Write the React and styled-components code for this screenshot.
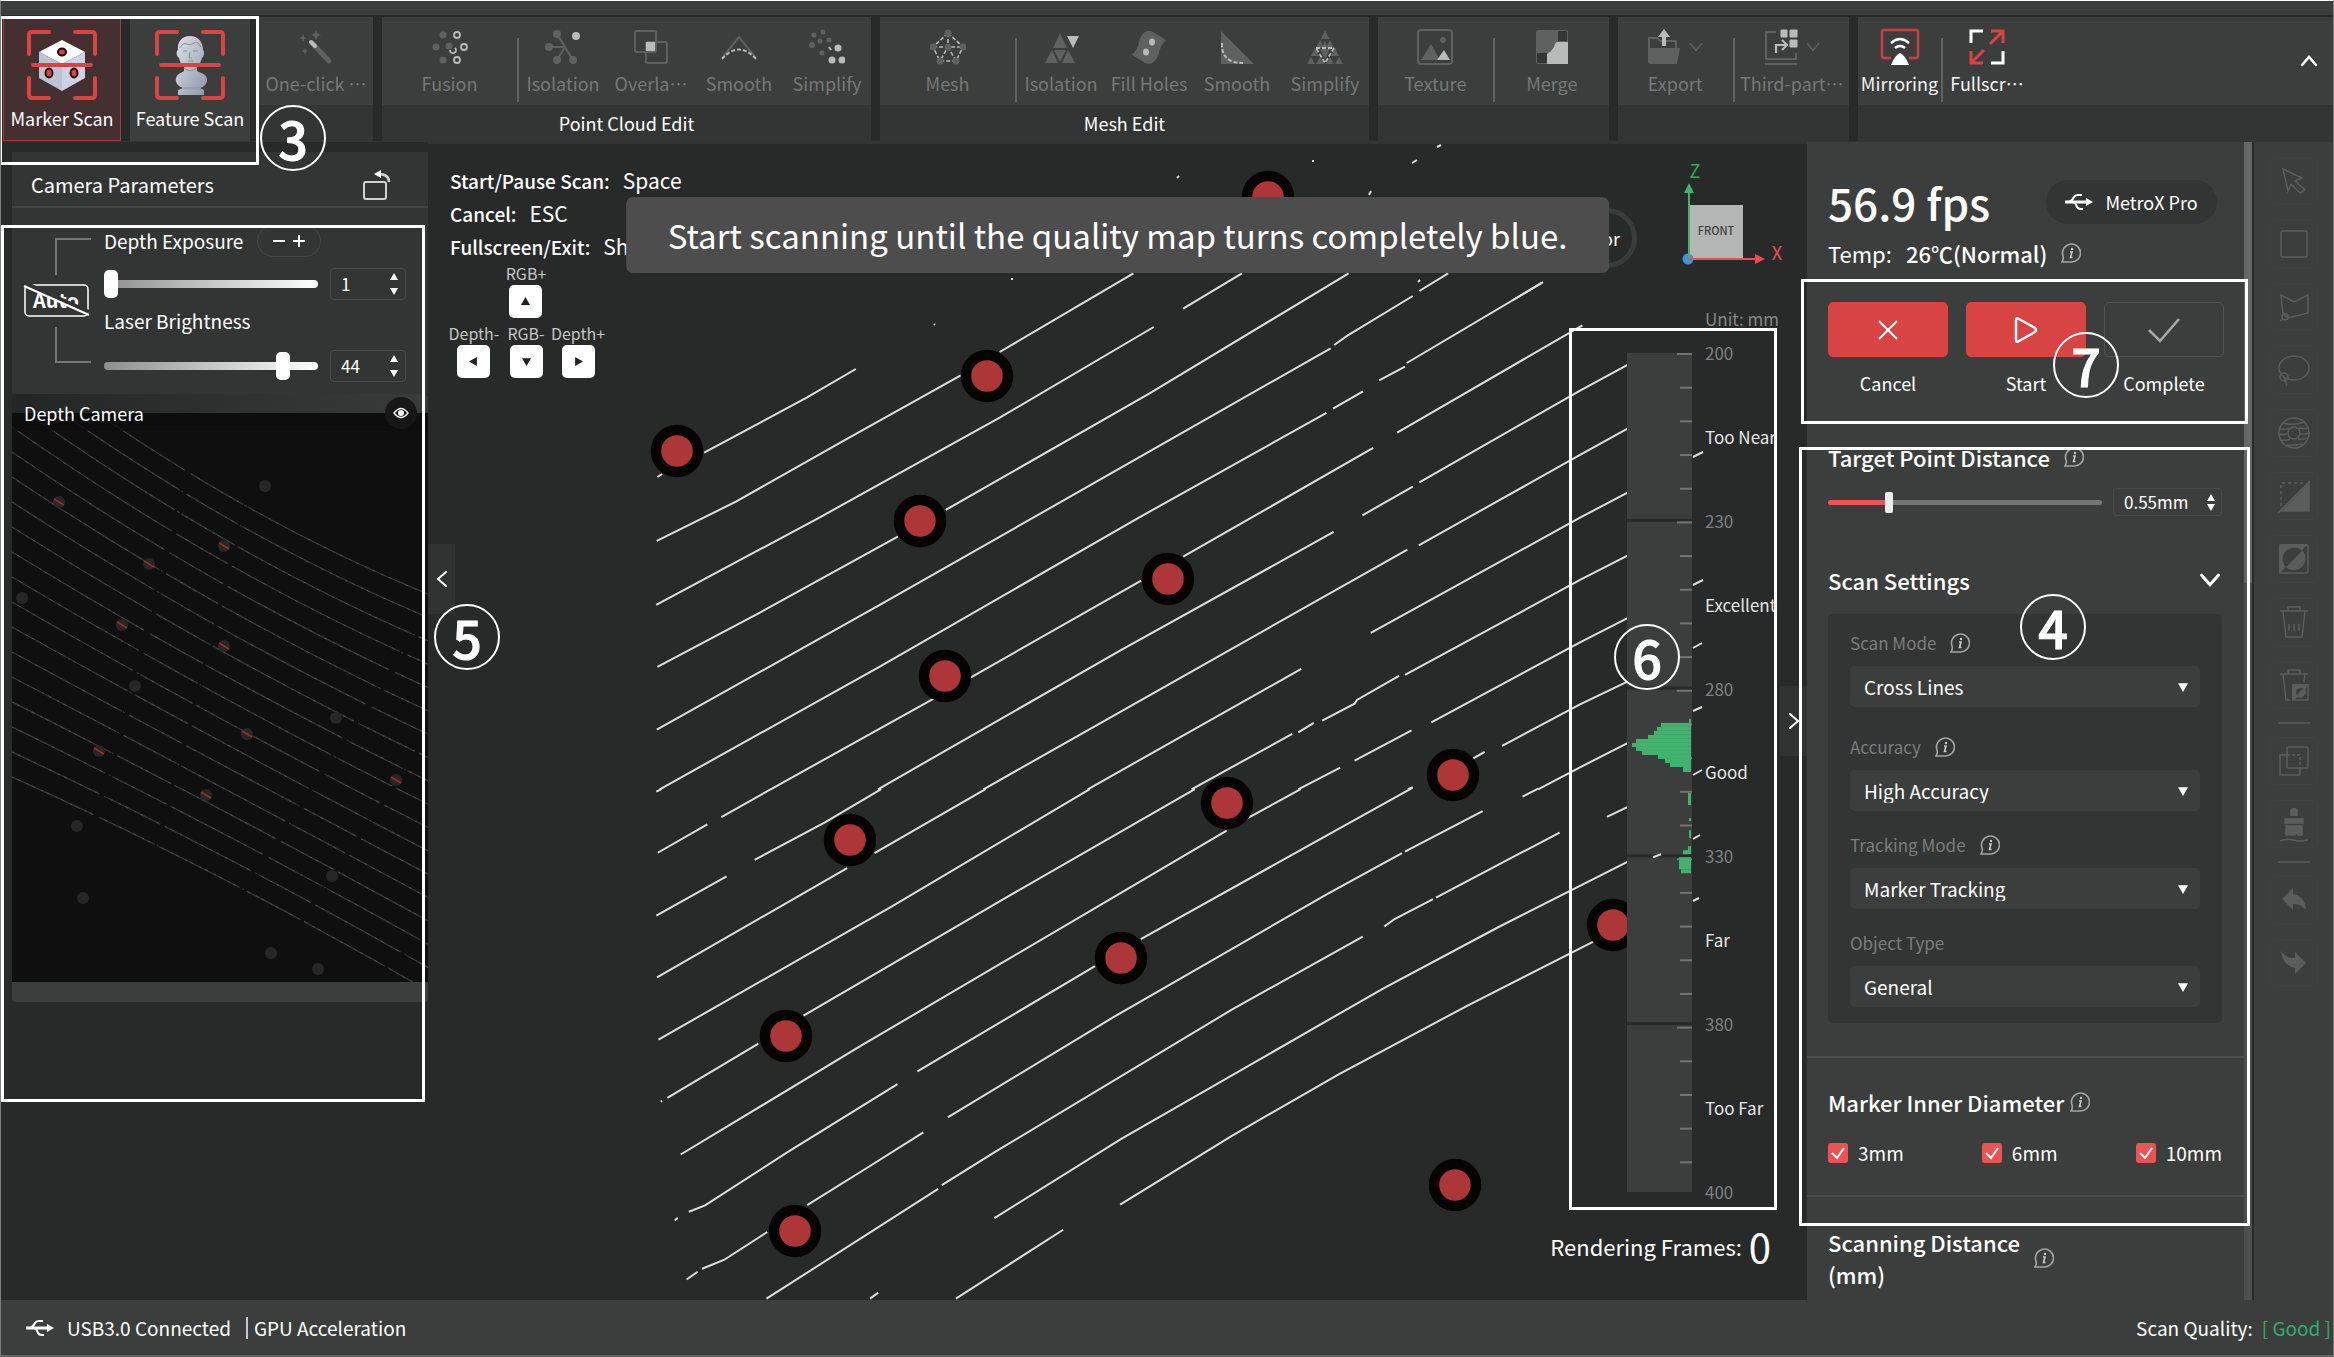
import React, { useState } from "react";
import styled, { createGlobalStyle } from "styled-components";

const GlobalStyle = createGlobalStyle`
  * { box-sizing: border-box; }
  body {
    margin: 0;
    background: #282a29;
    color: #fff;
    font-family: "Noto Sans CJK SC", "Noto Sans", sans-serif;
    font-size: 18px;
    line-height: 24px;
  }
  button, input, select { font: inherit; color: inherit; }
  button { padding: 0; border: 0; background: none; }
  svg { display: block; flex: none; }
`

const Window = styled.div`
  position: relative;
  display: flex;
  flex-direction: column;
  height: 100vh;
  min-height: 900px;
  overflow: hidden;
  border: 1px solid #7d7f7e;
  border-top-color: #fff;
  border-bottom: 2px solid #626463;
`

/* ---------- ribbon ---------- */

const TitleStrip = styled.div`
  height: 16px;
  flex: none;
  background: #3c3e3d;
  border-bottom: 2px solid #272928;
`

const Ribbon = styled.header`
  display: flex;
  gap: 9px;
  flex: none;
  height: 125px;
  padding-left: 2px;
  background: #282a29;
  border-bottom: 1px solid #333534;
`

const ScanMode = styled.button`
  display: flex;
  flex-direction: column;
  align-items: center;
  width: ${p => (p.$active ? 118 : 120)}px;
  padding-top: ${p => (p.$active ? 12 : 13)}px;
  background: ${p => (p.$active ? "#443031" : "#3c3e3d")};
  border: ${p => (p.$active ? "1px solid #a63c3e" : "0")};
  white-space: nowrap;

  span { margin-top: 6px; }
`

const Group = styled.section`
  display: flex;
  flex-direction: column;
  flex: ${p => (p.$width ? "none" : 1)};
  width: ${p => (p.$width ? p.$width + "px" : "auto")};
  background: #333534;
`

const GroupTools = styled.div`
  display: flex;
  height: 88px;
  background: #3c3e3d;
`

const GroupTitle = styled.h2`
  margin: 0;
  font-size: 18px;
  font-weight: 400;
  line-height: 36px;
  text-align: center;
`

const Tool = styled.button`
  display: flex;
  flex-direction: column;
  align-items: center;
  gap: 6px;
  flex: ${p => (p.$width ? "none" : 1)};
  width: ${p => (p.$width ? p.$width + "px" : "auto")};
  padding-top: 12px;
  color: ${p => (p.$on ? "#f2f2f2" : "#767877")};
  white-space: nowrap;
`

const IconPair = styled.span`
  display: flex;
  align-items: center;
  gap: 6px;
`

const ToolSeparator = styled.i`
  flex: none;
  width: 2px;
  height: 64px;
  margin-top: 21px;
  background: #626463;
`

const CollapseRibbon = styled.button`
  margin-left: auto;
  padding-right: 14px;
`

/* ---------- body ---------- */

const Body = styled.main`
  display: flex;
  flex: 1;
  min-height: 0;
`

const CameraPanel = styled.aside`
  flex: none;
  width: 427px;
  padding: 10px 0 0 11px;
`

const CameraHead = styled.div`
  display: flex;
  align-items: center;
  justify-content: space-between;
  height: 56px;
  padding: 12px 36px 0 19px;
  background: #333534;
  border-bottom: 2px solid #434544;

  h2 { margin: 0; font-size: 20px; font-weight: 400; }
`

const CameraControls = styled.div`
  display: flex;
  height: 186px;
  padding-top: 16px;
  background: #333534;
`

const AutoButton = styled.button`
  width: 82px;
  height: 140px;
  margin-left: 8px;
  padding-top: 11px;
`

const ControlStack = styled.div`
  display: flex;
  flex-direction: column;
  flex: 1;
  padding: 0 22px 0 2px;
`

const ControlTitle = styled.div`
  display: flex;
  align-items: center;
  height: 34px;
  gap: 14px;
  font-size: 19px;
`

const StepPill = styled.span`
  display: flex;
  align-items: center;
  justify-content: center;
  gap: 6px;
  width: 64px;
  height: 32px;
  border: 1px solid #454746;
  border-radius: 16px;

  button { display: flex; }
`

const ControlRow = styled.div`
  display: flex;
  align-items: center;
  gap: 12px;
  height: 32px;
  margin: ${p => (p.$low ? "12px" : "10px")} 0 4px;
`

const GradientRange = styled.input.attrs({ type: "range" })`
  appearance: none;
  flex: 1;
  min-width: 0;
  height: 8px;
  margin: 0;
  border-radius: 4px;
  background: linear-gradient(90deg, #8e8e8e, #fff);

  &::-webkit-slider-thumb {
    appearance: none;
    width: 14px;
    height: 28px;
    border-radius: 5px;
    background: #fff;
  }
`

const NumberBox = styled.div`
  display: flex;
  align-items: center;
  flex: none;
  width: ${p => p.$width}px;
  height: ${p => p.$height}px;
  padding: 0 ${p => (p.$height > 30 ? 7 : 6)}px 0 10px;
  border: 1px solid #484a49;
  border-radius: 4px;
  font-size: 17px;

  input {
    flex: 1;
    min-width: 0;
    padding: 0;
    border: 0;
    outline: 0;
    background: none;
  }
`

const Stepper = styled.span`
  display: flex;
  flex-direction: column;
  gap: ${p => p.$gap}px;

  button { display: flex; }
`

const DepthView = styled.figure`
  position: relative;
  margin: 0;
  border-bottom: 20px solid #3c3e3d;
  border-radius: 4px;
  background: linear-gradient(90deg, #242625, #393b3a);

  > svg { width: 100%; height: auto; padding-top: 19px; }
`

const DepthTitle = styled.figcaption`
  position: absolute;
  inset: 0 0 auto;
  display: flex;
  align-items: center;
  justify-content: space-between;
  height: 38px;
  padding: 0 11px 0 12px;
`

const EyeButton = styled.button`
  display: grid;
  place-items: center;
  width: 32px;
  height: 32px;
  border-radius: 50%;
  background: #161716;
`

/* ---------- viewport ---------- */

const Viewport = styled.section`
  position: relative;
  display: flex;
  justify-content: space-between;
  flex: 1;
  min-width: 0;
  border-top: 2px solid #323433;
`

const Scene = styled.svg`
  position: absolute;
  inset: 0;
  width: 100%;
  height: 100%;
`

const Hints = styled.div`
  position: relative;
  padding: 20px 0 0 22px;
`

const HintList = styled.dl`
  margin: 0;

  div { display: flex; gap: 13px; height: 33px; line-height: 33px; }
  dt { font-weight: 500; font-size: 19px; }
  dd { margin: 0; font-size: 21px; }
`

const KeyPad = styled.div`
  display: grid;
  grid-template-columns: repeat(3, 52px);
  justify-items: center;
  row-gap: 3px;
  width: 156px;
  margin: -2px 0 0 -2px;
`

const Key = styled.button`
  display: flex;
  flex-direction: column;
  align-items: center;
  grid-column: ${p => p.$col};
  color: #c4c5c4;
  font-size: 16px;
  white-space: nowrap;

  span {
    display: grid;
    place-items: center;
    width: 33px;
    height: 33px;
    border-radius: 5px;
    background: #fff;
  }
`

const ColorButton = styled.button`
  position: absolute;
  top: 64px;
  right: 170px;
  width: 60px;
  height: 60px;
  padding-right: 12px;
  border: 5px solid #3a3c3b;
  border-radius: 50%;
  text-align: right;
`

const Toast = styled.div`
  position: absolute;
  top: 53px;
  left: 50%;
  transform: translateX(-50%);
  padding: 0 42px;
  border-radius: 7px;
  background: #4d4d4d;
  font-size: 33px;
  line-height: 76px;
  white-space: nowrap;
`

const GaugeColumn = styled.div`
  position: relative;
  display: flex;
  flex-direction: column;
  align-items: flex-end;
  width: 260px;
  padding: 19px 22px 34px 0;
`

const UnitLabel = styled.div`
  width: 80px;
  margin-top: 38px;
  color: #858786;
  font-size: 17px;
`

const Gauge = styled.div`
  display: flex;
  flex: 1;
  gap: 13px;
  min-height: 0;
  margin-top: 10px;

  > svg { height: calc(100% - 24px); margin-top: 12px; }
`

const GaugeLabels = styled.ol`
  display: flex;
  flex-direction: column;
  justify-content: space-between;
  width: 80px;
  margin: 0;
  padding: 0;
  list-style: none;
  white-space: nowrap;
`

const GaugeLabel = styled.li`
  color: ${p => (p.$zone ? "#e6e6e6" : "#7e807f")};
  font-size: 17px;
`

const FrameCount = styled.div`
  display: flex;
  align-items: center;
  gap: 7px;
  height: 40px;
  margin: 22px 14px 0 0;
  font-size: 22px;
  white-space: nowrap;

  b { font-weight: 400; font-size: 40px; }
`

const PanelHandle = styled.button`
  position: absolute;
  ${p => p.$side}: 0;
  top: ${p => (p.$side === "left" ? 400 : 542)}px;
  display: grid;
  place-items: center;
  width: 27px;
  height: 70px;
  background: #313332;
`

/* ---------- settings ---------- */

const Settings = styled.aside`
  flex: none;
  width: 437px;
  padding: 30px 22px 0 21px;
  overflow: hidden;
  background: #3c3e3d;
`

const FpsRow = styled.div`
  display: flex;
  align-items: center;
  justify-content: space-between;
  height: 60px;
  padding-right: 5px;

  strong { font-size: 44px; font-weight: 500; line-height: 60px; }
`

const DevicePill = styled.span`
  display: flex;
  align-items: center;
  justify-content: center;
  gap: 12px;
  width: 171px;
  height: 44px;
  border-radius: 22px;
  background: #333534;
`

const TempRow = styled.div`
  display: flex;
  align-items: center;
  gap: 14px;
  height: 30px;
  margin-top: 6px;
  font-size: 22px;

  b { font-weight: 500; }
`

const Actions = styled.div`
  display: flex;
  gap: 18px;
  margin-top: 34px;
  padding-bottom: 23px;
`

const Action = styled.button`
  flex: none;
  width: 120px;
  line-height: 28px;

  span {
    display: grid;
    place-items: center;
    height: 55px;
    margin-bottom: 12px;
    border: 1px solid ${p => (p.$ghost ? "#525453" : "#d84443")};
    border-radius: 5px;
    background: ${p => (p.$ghost ? "none" : "#d84443")};
  }
`

const Rule = styled.hr`
  height: 2px;
  margin: ${p => p.$top || 0}px -22px ${p => p.$bottom}px -21px;
  border: 0;
  background: ${p => (p.$faint ? "#444645" : "#4c4e4d")};
`

const Heading = styled.h3`
  display: flex;
  align-items: center;
  gap: ${p => p.$gap || 14}px;
  margin: 0;
  font-size: 22px;
  font-weight: 500;
  line-height: 32px;

  > button { margin-left: auto; }
`

const DistanceRow = styled.div`
  display: flex;
  align-items: center;
  gap: 11px;
  height: 28px;
  margin: 15px 0 48px;
`

const RedRange = styled.input.attrs({ type: "range" })`
  appearance: none;
  flex: 1;
  min-width: 0;
  height: 5px;
  margin: 0;
  border-radius: 3px;
  background: linear-gradient(90deg, #ec5354 ${p => p.$fill}%, #747675 ${p => p.$fill}%);

  &::-webkit-slider-thumb {
    appearance: none;
    width: 8px;
    height: 21px;
    border-radius: 2px;
    background: #ececec;
  }
`

const Card = styled.div`
  margin-top: 18px;
  padding: 15px 22px 16px;
  border-radius: 5px;
  background: #333534;
`

const Field = styled.div`
  margin-top: ${p => p.$gap || 0}px;
`

const FieldLabel = styled.div`
  display: flex;
  align-items: center;
  gap: 14px;
  height: 28px;
  margin-bottom: 9px;
  color: #7b7d7c;
  font-size: 17px;
`

const SelectBox = styled.div`
  display: grid;
  align-items: center;

  select, svg { grid-area: 1 / 1; }
  svg { justify-self: end; margin-right: 12px; pointer-events: none; }
  select {
    appearance: none;
    width: 100%;
    height: 41px;
    padding: 0 14px;
    border: 0;
    border-radius: 5px;
    background: #3c3e3d;
    font-size: 19px;
  }
`

const Diameters = styled.div`
  display: flex;
  justify-content: space-between;
  margin-top: 21px;
`

const CheckLabel = styled.label`
  display: grid;
  grid-template-columns: 20px auto;
  align-items: center;
  column-gap: 10px;
  font-size: 19px;
  line-height: 28px;

  input, svg { grid-area: 1 / 1; }
  svg { pointer-events: none; }
  input {
    appearance: none;
    width: 20px;
    height: 20px;
    margin: 0;
    border-radius: 3px;
    background: #ec5354;
  }
`

const ScrollTrack = styled.div`
  flex: none;
  width: 10px;
  background: #4d4f4e;
  border-right: 2px solid #272928;

  div { height: 441px; background: #656766; }
`

const ToolColumn = styled.nav`
  display: flex;
  flex-direction: column;
  align-items: center;
  gap: 15px;
  flex: none;
  width: 79px;
  padding-top: 15px;
  background: #3c3e3d;

  button {
    display: grid;
    place-items: center;
    width: 48px;
    height: 48px;
    border: 1px solid #3f4140;
    border-radius: 4px;
    color: #5b5d5c;
  }
  hr { width: 32px; height: 2px; margin: -2px 0; border: 0; background: #525453; }
`

const StatusBar = styled.footer`
  display: flex;
  align-items: center;
  flex: none;
  height: 55px;
  padding: 0 2px 0 25px;
  background: #3c3e3d;
  font-size: 19px;
  white-space: pre;

  svg { margin-right: 13px; }
  i { width: 2px; height: 22px; margin: 0 6px 0 15px; background: #c8c9c8; }
  b { margin-left: 9px; font-weight: 400; color: #2fae68; }
`

const Spacer = styled.div`
  flex: 1;
`

/* ---------- call-outs ---------- */

const CalloutBox = styled.div`
  position: absolute;
  top: ${p => p.$top}px;
  ${p => p.$side}: ${p => p.$inset}px;
  width: ${p => p.$width}px;
  height: ${p => p.$height}px;
  border: 3px solid #fff;
  pointer-events: none;
`

const CalloutBadge = styled.div`
  position: absolute;
  top: ${p => p.$top}px;
  ${p => p.$side}: ${p => p.$inset}px;
  display: grid;
  place-items: center;
  width: 66px;
  height: 66px;
  border: 2px solid #fff;
  border-radius: 50%;
  font-size: 52px;
  font-weight: 500;
  line-height: 62px;
  -webkit-text-stroke: 1px #fff;
  pointer-events: none;
`

/* ---------- icons ---------- */

const Icon = ({ size = 36, box = 36, children, ...rest }) => (
  <svg width={size} height={size} viewBox={`0 0 ${box} ${box}`} fill="none" aria-hidden="true" {...rest}>
    {children}
  </svg>
);

const DIM = "#5f6160";
const LIT = "#b9baba";

const ScanFrame = ({ children }) => (
  <Icon size={70} box={70}>
    {children}
    <g stroke="#d94343" strokeWidth="4" strokeLinecap="round">
      <path d="M2 24V5Q2 2 5 2H22M48 2H65Q68 2 68 5V24M68 48V65Q68 68 65 68H48M22 68H5Q2 68 2 65V48" />
      <path d="M6 35H64" />
    </g>
  </Icon>
);

const MarkerIcon = () => (
  <ScanFrame>
    <path d="M35 10L58 22L35 34L12 22Z" fill="#fff" />
    <path d="M12 22L35 34V61L12 48Z" fill="#bfc2d3" />
    <path d="M58 22L35 34V61L58 48Z" fill="#cdd2e6" />
    <g fill="#d94343" stroke="#150a0a" strokeWidth="2">
      <ellipse cx="35" cy="22" rx="4" ry="3.5" />
      <ellipse cx="22" cy="43" rx="3.5" ry="4.5" />
      <ellipse cx="47" cy="43" rx="3.5" ry="4.5" />
    </g>
  </ScanFrame>
);

const BustIcon = () => (
  <ScanFrame>
    <defs>
      <linearGradient id="stone" x1="0" x2="1" y1="0" y2="1">
        <stop offset="0" stopColor="#dfe2ea" />
        <stop offset="1" stopColor="#8f96a6" />
      </linearGradient>
    </defs>
    <path fill="url(#stone)" d="M35 6C43 6 48 12 48 20C50 21 49 27 47 28C46 32 44 35 42 37V41C46 43 52 44 52 50C52 54 49 57 45 58L49 60V65H23V60L28 58C23 56 20 53 21 48C22 44 26 43 29 41V37C26 35 25 31 24 28C21 26 21 21 23 20C22 12 27 6 35 6Z" />
    <path stroke="#858c9c" strokeWidth="1" d="M25 18Q28 12 32 14T39 13T46 17M28 21H32M38 21H43M35 22L34 28H37M33 31H38M29 38Q35 43 42 38M28 58H46" />
  </ScanFrame>
);

const WandIcon = () => (
  <Icon>
    <path d="M14 14L31 32" stroke={DIM} strokeWidth="5" strokeLinecap="round" />
    <path d="M13 13L17 17" stroke={LIT} strokeWidth="4" strokeLinecap="round" />
    <path fill={DIM} d="M18 1L19.500 4.500L23 6L19.500 7.500L18 11L16.500 7.500L13 6L16.500 4.500ZM5 5L6 8L9 9L6 10L5 13L4 10L1 9L4 8ZM7 19L8 21L10 22L8 23L7 26L6 23L4 22L6 21Z" />
  </Icon>
);

const FusionIcon = () => (
  <Icon>
    <g fill={DIM}>
      <circle cx="11" cy="6" r="3.500" /><circle cx="4" cy="18" r="3.500" /><circle cx="11" cy="31" r="3.500" /><circle cx="17" cy="17" r="3.500" />
    </g>
    <g stroke={LIT} strokeWidth="1.800">
      <circle cx="25" cy="6" r="3" /><circle cx="32" cy="18" r="3" /><circle cx="25" cy="31" r="3" /><path d="M23 19A3 3 0 1 1 18 21" />
    </g>
  </Icon>
);

const IsolationIcon = () => (
  <Icon>
    <path d="M12 5L20 18H4M20 18L12 31M20 18L28 31" stroke={DIM} strokeWidth="2" />
    <g fill={DIM}>
      <circle cx="12" cy="5" r="4" /><circle cx="4" cy="18" r="4" /><circle cx="12" cy="31" r="4" /><circle cx="28" cy="31" r="4" />
    </g>
    <circle cx="31" cy="7" r="4" fill={LIT} />
  </Icon>
);

const OverlapIcon = () => (
  <Icon>
    <rect x="2" y="2" width="21" height="21" rx="2" stroke={DIM} strokeWidth="2" />
    <rect x="13" y="13" width="21" height="21" rx="2" stroke={DIM} strokeWidth="2" />
    <rect x="13" y="13" width="9" height="9" fill={LIT} />
  </Icon>
);

const SmoothIcon = () => (
  <Icon>
    <path d="M1 29L18 8L35 29" stroke={DIM} strokeWidth="2" />
    <path d="M1 30Q18 11 35 30" stroke={LIT} strokeWidth="2" strokeDasharray="4 2" />
  </Icon>
);

const SimplifyIcon = () => (
  <Icon>
    <g fill={DIM}>
      <circle cx="5" cy="6" r="2.500" /><circle cx="14" cy="3" r="2.500" /><circle cx="3" cy="16" r="3" /><circle cx="11" cy="12" r="2.500" /><circle cx="20" cy="11" r="2.500" /><circle cx="13" cy="24" r="2.500" />
    </g>
    <g fill={LIT}>
      <circle cx="29" cy="19" r="3.500" /><circle cx="23" cy="31" r="3.500" /><circle cx="33" cy="31" r="3.500" />
    </g>
    <path d="M20 18L22 21" stroke={LIT} strokeWidth="2" />
  </Icon>
);

const MeshIcon = () => (
  <Icon>
    <path d="M18 4L33 18L26 32H10L3 18ZM3 18H33M18 4V18L10 32M18 18L26 32" stroke={LIT} strokeWidth="1.600" strokeDasharray="4 2" />
    <g fill={DIM}>
      <circle cx="18" cy="4" r="3.500" /><circle cx="33" cy="18" r="3.500" /><circle cx="26" cy="32" r="3.500" /><circle cx="10" cy="32" r="3.500" /><circle cx="3" cy="18" r="3.500" /><circle cx="18" cy="18" r="3.500" />
    </g>
  </Icon>
);

const MeshIsolationIcon = () => (
  <Icon>
    <path fill={DIM} d="M17 4L24 19H10ZM9 21L15 34H2ZM11 21H23L17 33ZM25 21L32 34H19Z" />
    <path fill={LIT} d="M24 7H36L30 19Z" />
  </Icon>
);

const FillHolesIcon = () => (
  <Icon>
    <path fill={DIM} d="M13 4Q17 0 22 3L35 11Q29 17 28 24Q26 33 18 35Q14 35 11 32L1 26Q7 20 8 13Q9 7 13 4Z" />
    <ellipse cx="21" cy="13" rx="3" ry="3.500" fill={LIT} /><ellipse cx="15" cy="23" rx="3" ry="3.500" fill={LIT} />
  </Icon>
);

const MeshSmoothIcon = () => (
  <Icon>
    <path d="M2 2L35 35H2Z" fill={DIM} />
    <path d="M3 14Q2 34 24 34" stroke={LIT} strokeWidth="2" strokeDasharray="4 2" />
  </Icon>
);

const MeshSimplifyIcon = () => (
  <Icon>
    <path fill={DIM} d="M18 1L22 10H14ZM13 11L17 19H9ZM23 11L27 19H19ZM8 19L12 27H4ZM28 19L32 27H24ZM18 12L21 18H15ZM4 28L8 35H0ZM13 28L17 35H9ZM23 28L27 35H19ZM32 28L36 35H28ZM13 20H23L18 30Z" />
    <path d="M9 19H27L18 34Z" stroke={LIT} strokeWidth="1.800" strokeDasharray="4 2" />
  </Icon>
);

const TextureIcon = () => (
  <Icon>
    <rect x="1" y="1" width="34" height="34" rx="3" stroke={DIM} strokeWidth="2" />
    <circle cx="26" cy="11" r="3" fill={DIM} />
    <path d="M4 31L14 15L23 31Z" fill={DIM} /><path d="M20 31L27 21L33 31Z" fill={LIT} />
  </Icon>
);

const MergeIcon = () => (
  <Icon>
    <rect x="2" y="1" width="32" height="34" rx="2" fill={DIM} />
    <path d="M24 2H33V12H24ZM3 24H13V34H3Z" fill="#343635" />
    <path d="M24 13H34V35H13V25Q18 22 20 18Q21 13 24 13Z" fill={LIT} />
  </Icon>
);

const ExportIcon = () => (
  <Icon>
    <path d="M3 34V9H11L14 12H30V19" stroke={DIM} strokeWidth="2" /><path d="M4 19H34L31 35H4Q2 35 2 32Z" fill={DIM} />
    <path d="M18 0L24 8H20V17H16V8H12Z" fill={LIT} />
  </Icon>
);

const ThirdPartyIcon = () => (
  <Icon>
    <path d="M13 3H3V30H33V24M2 35H34" stroke={DIM} strokeWidth="2" />
    <path d="M18 1H24V8H18ZM27 1H34V8H27ZM27 11H34V18H27Z" fill={LIT} stroke={LIT} />
    <path d="M13 24V16H23M19 11L24 16L19 21" stroke={LIT} strokeWidth="2.200" />
  </Icon>
);

const MirroringIcon = () => (
  <Icon overflow="visible">
    <path d="M9 29H2Q0 29 0 26V3Q0 1 2 1H34Q36 1 36 3V26Q36 29 34 29H27" stroke="#c94243" strokeWidth="2.500" />
    <path d="M18 24Q23 26 27 36H9Q13 26 18 24Z" fill="#fff" /><path d="M9 14Q18 6 27 14M13 19Q18 15 23 19" stroke="#fff" strokeWidth="2.500" />
  </Icon>
);

const FullscreenIcon = () => (
  <Icon>
    <path d="M2 14V2H14M34 22V34H22" stroke="#fff" strokeWidth="3" />
    <path d="M22 2H34V14M34 2L21 15M14 34H2V22M2 34L15 21" stroke="#d94343" strokeWidth="3" />
  </Icon>
);

const Chevron = ({ turn = 0, size = 20, color = "#fff", width = 2 }) => (
  <Icon size={size} box={20} style={{ transform: `rotate(${turn}deg)` }}>
    <path d="M3 6L10 14L17 6" stroke={color} strokeWidth={width} strokeLinecap="round" />
  </Icon>
);

const Triangle = ({ turn = 0, w = 8, color = "#fff" }) => (
  <Icon size={w} box={8} style={{ transform: `rotate(${turn}deg)` }}>
    <path d="M0 1H8L4 8Z" fill={color} />
  </Icon>
);

const UsbIcon = () => (
  <svg width="28" height="18" viewBox="0 0 28 18" fill="none" stroke="#fff" strokeWidth="2" aria-hidden="true">
    <path d="M0 9H22" strokeWidth="3" /><path d="M21 5L28 9L21 13Z" fill="#fff" stroke="none" />
    <path d="M4 9Q7 8 9 4Q10 2 13 2H17M8 9Q11 10 12 14Q13 16 16 16H18" />
  </svg>
);

const InfoIcon = () => (
  <Icon size={20} box={20}>
    <path d="M3 19H10A9 9 0 1 0 2 13Q3 16 1 19Z" stroke="#a3a5a4" strokeWidth="1.600" />
    <path d="M9 9H11L9.500 14.500H11.500" stroke="#c9cac9" strokeWidth="1.600" /><circle cx="11" cy="6" r="1.200" fill="#c9cac9" />
  </Icon>
);

const AutoIcon = () => (
  <svg width="82" height="126" viewBox="0 0 82 126" fill="none" aria-hidden="true">
    <path d="M71 2H36V38M36 90V125H71" stroke="#767877" strokeWidth="2" />
    <rect x="5" y="48" width="63" height="31" rx="4" stroke="#fff" strokeWidth="1.500" />
    <text x="36" y="71" fill="#fff" fontSize="20" fontWeight="700" textAnchor="middle">Auto</text>
    <path d="M5 46L69 75" stroke="#333534" strokeWidth="4" /><path d="M4 49L69 78" stroke="#fff" strokeWidth="2" />
  </svg>
);

const SIDE_TOOLS = [
  ["Pick", <path d="M5 4L24 13L17 16L27 25L22 28L13 19L10 26Z" />],
  ["Rectangle", <rect x="3" y="3" width="26" height="26" rx="1" />],
  ["Polygon", <><path d="M3 4L16 11L30 4V22L10 27L5 23Z" /><circle cx="7" cy="26" r="3" /><path d="M5 28L2 30" /></>],
  ["Lasso", <><ellipse cx="16" cy="14" rx="15" ry="12" /><circle cx="6" cy="23" r="4" /><path d="M6 23L9 32" /></>],
  ["Through", <><circle cx="16" cy="16" r="15" /><circle cx="16" cy="16" r="6" /><path d="M5 6Q16 9 26 5M2 12Q7 13 11 11M21 11Q26 12 30 11M1 17Q5 18 9 17M23 17Q27 18 31 16M3 23Q8 24 12 22M20 22Q26 23 29 21M8 28Q16 29 24 27" /></>],
  ["Invert", <><path d="M31 4V31H4Z" fill="currentColor" /><path d="M3 26V3H27" strokeDasharray="3 3" /><path d="M0 33L32 1" /></>],
  ["Clear", <><rect x="2" y="2" width="28" height="28" rx="1" /><path d="M2 2H28L2 29Z" fill="currentColor" /><path d="M24 8A11 11 0 0 1 9 24Z" fill="currentColor" /><path d="M24 8A11 11 0 0 0 8 24Z" fill="#3c3e3d" stroke="none" /></>],
  ["Delete", <path d="M2 5H30M10 5V1H22V5M5 5L8 31H24L27 5M11 18V25M16 18V25M21 18V25" />],
  ["Delete rest", <><path d="M2 5H30M10 5V1H22V5M5 5L8 31H12M27 5L26 13" /><rect x="15" y="16" width="15" height="15" /><path d="M15 16H30L15 31Z" fill="currentColor" /><circle cx="22.500" cy="23.500" r="4.500" fill="#3c3e3d" stroke="none" /><path d="M26 20A5 5 0 0 1 19 27Z" fill="currentColor" /></>],
  null,
  ["Copy", <><rect x="9" y="2" width="21" height="21" rx="1" /><path d="M9 10H2V30H22V23" /><path d="M9 10H22V23" strokeDasharray="3 2" /></>],
  ["Clean", <><path d="M13 8V2Q16 -1 19 2V8M7 11H25V15H7ZM8 18H24V27H20L19 23L17 27H12V24L10 27H8Z" fill="currentColor" /><path d="M2 33Q9 30 15 32T30 32" /></>],
  null,
  ["Undo", <path fill="currentColor" stroke="none" d="M4 15L15 4V10Q27 12 28 26Q22 19 15 20V26Z" />],
  ["Redo", <path fill="currentColor" stroke="none" d="M28 16L17 27V21Q5 19 3 4Q9 12 17 11V5Z" />],
];

/* ---------- data ---------- */

const POINT_TOOLS = [
  ["Isolation", IsolationIcon],
  ["Overla…", OverlapIcon],
  ["Smooth", SmoothIcon],
  ["Simplify", SimplifyIcon],
];

const MESH_TOOLS = [
  ["Isolation", MeshIsolationIcon],
  ["Fill Holes", FillHolesIcon],
  ["Smooth", MeshSmoothIcon],
  ["Simplify", MeshSimplifyIcon],
];

// laser lines, one patch of the cloud per entry, each on its own grid
const PATCHES = [
  {
    place: "translate(640 270) scale(.5995 .3333)",
    lines: [
      "29,621 37,612", "107,548 278,383 360,297",
      "28,813 160,695 340,512 535,316", "600,246 823,10",
      "27,1005 300,742 600,443 857,171", "906,116 1004,10",
      "29,1191 200,1028 430,800", "510,720 850,370 1182,10",
      "28,1379 400,1005 820,575 1152,235", "1158,225 1180,197 1289,78", "1300,63 1348,10",
      "33,1558 400,1190 830,745 1145,429", "1156,416 1206,364", "1233,331 1276,290", "1279,279 1505,38",
      "218,1558 490,1286", "552,1222 836,932", "906,860 1223,534", "1263,488 1572,166",
      "397,1558 800,1143 1157,786", "1205,736 1289,650", "1300,637 1568,362 1648,284",
      "573,1558 900,1225 1280,839", "1299,826 1568,555 1648,475",
      "747,1558 1103,1197", "1219,1089 1568,743 1648,667",
      "920,1558 1088,1392", "1098,1387 1124,1359", "1138,1352 1192,1301 1196,1290 1266,1218", "1276,1215 1568,930 1648,856",
      "1098,1558 1168,1493", "1192,1472 1287,1381", "1320,1357 1568,1117 1648,1044",
      "1281,1558 1289,1552", "1390,1465 1409,1446", "1438,1428 1568,1303 1648,1234",
      "1498,1558 1568,1492 1648,1419",
    ],
  },
  {
    place: "translate(640 770) scale(.7398 .3744)",
    lines: [
      "22,58 29,51", "24,221 91,145", "110,126 177,51",
      "22,389 117,284", "155,240 250,140 326,51",
      "23,554 280,262", "317,222 467,51",
      "25,720 340,365 608,51",
      "28,886 30,884", "37,876 160,731", "221,656 500,335 750,51",
      "55,1027 300,735 793,162", "820,130 893,51",
      "47,1203 51,1196", "66,1180 88,1163 200,1020 348,839", "375,805 615,524", "677,452 900,206 1044,48",
      "63,1361 78,1340", "84,1332 114,1308 172,1234", "226,1162 305,1065 383,968",
      "416,928 640,660 930,330 1030,222", "1034,218 1139,110", "1193,71 1214,50",
      "171,1412 403,1119", "408,1109 480,1020 800,640 977,445", "1006,418 1020,398 1072,345", "1076,341 1243,167", "1307,125 1336,98",
      "311,1412 322,1396", "479,1197 650,986 1005,583 1160,420 1336,244",
      "427,1412 572,1228", "649,1161 800,977 945,812 1118,630 1290,457",
    ],
  },
  {
    place: "",
    lines: [
      "1693,457 1703,452", "1693,585 1703,580", "1693,648 1702,643", "1693,711 1702,707",
      "1693,775 1702,770", "1693,839 1700,835", "1693,901 1699,898",
      "1233,141 1235,142", "1312,161 1314,161", "1437,147 1441,145", "1412,163 1417,160", "1369,195 1371,191",
      "1177,178 1179,176", "1011,279 1013,279", "934,324 935,325",
      "1418,282 1420,280", "1513,300 1543,282",
    ],
  },
];

const MARKERS = [
  [1268, 197], [987, 376], [677, 451], [920, 521], [1168, 579], [945, 676], [1453, 775],
  [1227, 803], [850, 840], [1121, 958], [786, 1036], [795, 1231], [1455, 1185], [1613, 925],
];

const DEPTH_DOTS = [
  [265, 486], [59, 502, 1], [224, 546, 1], [149, 564, 1], [22, 598], [122, 625, 1], [224, 646, 1], [135, 686],
  [336, 718], [247, 734, 1], [99, 751, 1], [396, 780, 1], [206, 795, 1], [77, 826], [332, 876], [83, 898],
  [271, 953], [318, 969],
];

// [top, height, width] in gauge units
const HISTOGRAM = [
  [365, 4, 2], [369, 4, 30], [373, 4, 34], [377, 4, 37], [381, 4, 43], [385, 4, 55], [389, 4, 59], [393, 4, 55],
  [397, 4, 49], [401, 4, 33], [405, 4, 26], [409, 4, 21], [413, 5, 8], [439, 12, 3], [464, 3, 2], [476, 8, 2],
  [492, 4, 3], [496, 4, 8], [503, 12, 12], [515, 4, 10],
];

const SCALE = ["200", "Too Near", "230", "Excellent", "280", "Good", "330", "Far", "380", "Too Far", "400"];

const FIELDS = [
  { id: "mode", label: "Scan Mode", value: "Cross Lines", info: true },
  { id: "accuracy", label: "Accuracy", value: "High Accuracy", info: true, gap: 26 },
  { id: "tracking", label: "Tracking Mode", value: "Marker Tracking", info: true, gap: 20 },
  { id: "object", label: "Object Type", value: "General", gap: 20 },
];

/* ---------- parts ---------- */

function ToolButton({ label, icon: Glyph, width, on, menu }) {
  return (
    <Tool $width={width} $on={on}>
      {menu ? (
        <IconPair>
          <Glyph />
          <Chevron size={16} color={DIM} />
        </IconPair>
      ) : (
        <Glyph />
      )}
      <span>{label}</span>
    </Tool>
  )
}

function EditGroup({ title, first, firstIcon, tools }) {
  return (
    <Group $width={489}>
      <GroupTools>
        <ToolButton label={first} icon={firstIcon} width={135} />
        <ToolSeparator />
        {tools.map(([label, icon]) => (
          <ToolButton key={label} label={label} icon={icon} width={88} />
        ))}
      </GroupTools>
      <GroupTitle>{title}</GroupTitle>
    </Group>
  )
}

function TopRibbon() {
  return (
    <Ribbon>
      <ScanMode $active>
        <MarkerIcon />
        <span>Marker Scan</span>
      </ScanMode>
      <ScanMode>
        <BustIcon />
        <span>Feature Scan</span>
      </ScanMode>
      <Group $width={114}>
        <GroupTools>
          <ToolButton label="One-click …" icon={WandIcon} />
        </GroupTools>
      </Group>
      <EditGroup title="Point Cloud Edit" first="Fusion" firstIcon={FusionIcon} tools={POINT_TOOLS} />
      <EditGroup title="Mesh Edit" first="Mesh" firstIcon={MeshIcon} tools={MESH_TOOLS} />
      <Group $width={231}>
        <GroupTools>
          <ToolButton label="Texture" icon={TextureIcon} />
          <ToolSeparator />
          <ToolButton label="Merge" icon={MergeIcon} />
        </GroupTools>
      </Group>
      <Group $width={231}>
        <GroupTools>
          <ToolButton label="Export" icon={ExportIcon} menu />
          <ToolSeparator />
          <ToolButton label="Third-part…" icon={ThirdPartyIcon} menu />
        </GroupTools>
      </Group>
      <Group>
        <GroupTools>
          <ToolButton label="Mirroring" icon={MirroringIcon} width={83} on />
          <ToolSeparator />
          <ToolButton label="Fullscr…" icon={FullscreenIcon} width={88} on />
          <CollapseRibbon aria-label="Collapse ribbon">
            <Chevron turn={180} width={2.5} />
          </CollapseRibbon>
        </GroupTools>
      </Group>
    </Ribbon>
  )
}

function NumberField({ label, value, onChange, width, height, gap }) {
  return (
    <NumberBox $width={width} $height={height}>
      <input aria-label={label} value={value} onChange={onChange} />
      <Stepper $gap={gap}>
        <button aria-label={`Increase ${label}`}><Triangle turn={180} /></button>
        <button aria-label={`Decrease ${label}`}><Triangle /></button>
      </Stepper>
    </NumberBox>
  )
}

function DepthImage() {
  const lines = Array.from({ length: 18 }, (_, i) => {
    const y = 777 - i * 25;
    return `M12 ${y}Q220 ${y + 208 * (0.45 + 0.018 * i)} 428 ${y + 416 * (0.514 + 0.004 * i)}`;
  });
  return (
    <svg viewBox="12 413 416 569" aria-hidden="true">
      <rect x="12" y="413" width="416" height="569" fill="#0f0f0f" />
      {lines.map((d, i) => (
        <g key={d} fill="none">
          <path d={d} stroke="#353635" strokeWidth="1.400" strokeDasharray={`${90 + i * 7} 8 60 5`} />
          <path d={d} stroke="#6a6a6a" strokeWidth="1" strokeDasharray={`2 ${4 + (i % 3)} 3 7`} strokeOpacity=".6" />
        </g>
      ))}
      {DEPTH_DOTS.map(([x, y, hit]) => (
        <g key={`${x}-${y}`}>
          <circle cx={x} cy={y} r="6" fill="#262726" />
          {hit && <path d={`M${x - 5} ${y - 3}L${x + 5} ${y + 3}`} stroke="#a02c2c" strokeWidth="1.500" />}
        </g>
      ))}
      <rect x="12" y="413" width="416" height="18" fill="#0d0d0d" fillOpacity=".8" />
    </svg>
  )
}

function Camera() {
  const [exposure, setExposure] = useState(1);
  const [laser, setLaser] = useState(44);
  return (
    <CameraPanel>
      <CameraHead>
        <h2>Camera Parameters</h2>
        <button aria-label="Rotate view">
          <Icon size={30} box={30}>
            <rect x="2" y="12" width="22" height="17" rx="2" stroke="#d0d1d0" strokeWidth="2" />
            <path d="M27 12Q27 4 16 4" stroke="#d0d1d0" strokeWidth="2.500" /><path d="M12 4L19 0V8Z" fill="#fff" />
          </Icon>
        </button>
      </CameraHead>
      <CameraControls>
        <AutoButton aria-label="Automatic exposure"><AutoIcon /></AutoButton>
        <ControlStack>
          <ControlTitle>
            <label htmlFor="exposure">Depth Exposure</label>
            <StepPill>
              <button aria-label="Less"><Icon size={14} box={14}><path d="M1 7H13" stroke="#fff" strokeWidth="2" /></Icon></button>
              <button aria-label="More"><Icon size={14} box={14}><path d="M1 7H13M7 1V13" stroke="#fff" strokeWidth="2" /></Icon></button>
            </StepPill>
          </ControlTitle>
          <ControlRow>
            <GradientRange id="exposure" min="1" max="51" value={exposure} onChange={e => setExposure(e.target.value)} />
            <NumberField label="Exposure value" value={exposure} onChange={e => setExposure(e.target.value)} width={76} height={32} gap={6} />
          </ControlRow>
          <ControlTitle>
            <label htmlFor="laser">Laser Brightness</label>
          </ControlTitle>
          <ControlRow $low>
            <GradientRange id="laser" min="1" max="51" value={laser} onChange={e => setLaser(e.target.value)} />
            <NumberField label="Laser value" value={laser} onChange={e => setLaser(e.target.value)} width={76} height={32} gap={6} />
          </ControlRow>
        </ControlStack>
      </CameraControls>
      <DepthView>
        <DepthImage />
        <DepthTitle>
          Depth Camera
          <EyeButton aria-label="Toggle camera">
            <Icon size={16} box={16}>
              <path d="M1 8Q8 -1 15 8Q8 17 1 8Z" stroke="#fff" strokeWidth="1.300" /><circle cx="8" cy="8" r="3" fill="#fff" />
            </Icon>
          </EyeButton>
        </DepthTitle>
      </DepthView>
    </CameraPanel>
  )
}

function AxisCube() {
  return (
    <svg width="104" height="106" viewBox="1682 163 104 106" aria-hidden="true">
      <rect x="1690" y="205" width="54" height="54" fill="#b4b6b5" />
      <text x="1717" y="235" fill="#3e403f" fontSize="11" fontWeight="500" textAnchor="middle">FRONT</text>
      <circle cx="1689" cy="259" r="5.500" fill="#4093d6" />
      <path d="M1690 258V190" stroke="#3fb36f" strokeWidth="2" /><path d="M1690 183L1695 193H1685Z" fill="#3fb36f" />
      <path d="M1690 259H1757" stroke="#e84e50" strokeWidth="2" /><path d="M1766 259L1756 254V264Z" fill="#e84e50" />
      <text x="1696" y="178" fill="#35a866" fontSize="18" textAnchor="middle">Z</text>
      <text x="1778" y="260" fill="#e84e50" fontSize="18" textAnchor="middle">X</text>
    </svg>
  )
}

function DistanceGauge() {
  return (
    <Gauge>
      <svg width="65" viewBox="0 0 65 837" preserveAspectRatio="none" aria-hidden="true">
        <rect width="65" height="837" fill="#3c3e3d" />
        {[1, 2, 3, 4].map(n => <rect key={n} y={n * 167.4 - 2} width="65" height="3" fill="#282a29" />)}
        {Array.from({ length: 25 }, (_, n) => (
          <rect key={n} x={n % 5 ? 53 : 50} y={n * 33.6} width={n % 5 ? 12 : 15} height="2" fill="#737574" />
        ))}
        <path d="M26 503L34 500" stroke="#ddd" strokeWidth="2" />
        {HISTOGRAM.map(([y, h, w]) => <rect key={y} x={64 - w} y={y} width={w} height={h} fill="#41b36f" />)}
      </svg>
      <GaugeLabels>
        {SCALE.map((text, n) => <GaugeLabel key={text} $zone={n % 2 === 1}>{text}</GaugeLabel>)}
      </GaugeLabels>
    </Gauge>
  )
}

function ScanView() {
  return (
    <Viewport>
      <Scene viewBox="428 144 1379 1156" preserveAspectRatio="xMidYMid slice" aria-hidden="true">
        {PATCHES.map(patch => (
          <g key={patch.place} transform={patch.place} fill="none" stroke="#dededd" strokeWidth="2">
            {patch.lines.map(points => <polyline key={points} points={points} vectorEffect="non-scaling-stroke" />)}
          </g>
        ))}
        {MARKERS.map(([x, y]) => (
          <circle key={`${x}-${y}`} cx={x} cy={y} r="21" fill="#ad3738" stroke="#060303" strokeWidth="10.500" />
        ))}
      </Scene>
      <Hints>
        <HintList>
          <div><dt>Start/Pause Scan:</dt><dd>Space</dd></div>
          <div><dt>Cancel:</dt><dd>ESC</dd></div>
          <div><dt>Fullscreen/Exit:</dt><dd>Sh</dd></div>
        </HintList>
        <KeyPad>
          <Key $col={2}>RGB+<span><Triangle turn={180} w={9} color="#222" /></span></Key>
          <Key $col={1}>Depth-<span><Triangle turn={90} w={9} color="#222" /></span></Key>
          <Key $col={2}>RGB-<span><Triangle w={9} color="#222" /></span></Key>
          <Key $col={3}>Depth+<span><Triangle turn={-90} w={9} color="#222" /></span></Key>
        </KeyPad>
      </Hints>
      <GaugeColumn>
        <AxisCube />
        <UnitLabel>Unit: mm</UnitLabel>
        <DistanceGauge />
        <FrameCount>Rendering Frames: <b>0</b></FrameCount>
      </GaugeColumn>
      <ColorButton>or</ColorButton>
      <Toast role="status">Start scanning until the quality map turns completely blue.</Toast>
      <PanelHandle $side="left" aria-label="Hide camera panel"><Chevron turn={90} /></PanelHandle>
      <PanelHandle $side="right" aria-label="Hide settings panel"><Chevron turn={-90} /></PanelHandle>
    </Viewport>
  )
}

function ScanSettings() {
  const [distance, setDistance] = useState(0.55);
  return (
    <Settings>
      <FpsRow>
        <strong>56.9 fps</strong>
        <DevicePill><UsbIcon />MetroX Pro</DevicePill>
      </FpsRow>
      <TempRow>
        <span>Temp:</span>
        <b>26℃(Normal)</b>
        <InfoIcon />
      </TempRow>
      <Actions>
        <Action>
          <span><Icon size={22} box={22}><path d="M2 2L20 20M20 2L2 20" stroke="#fff" strokeWidth="2" /></Icon></span>
          Cancel
        </Action>
        <Action>
          <span><Icon size={26} box={26}><path d="M3 3Q3 0 6 2L22 11Q24 13 22 15L6 24Q3 26 3 23Z" stroke="#fff" strokeWidth="2.500" /></Icon></span>
          Start
        </Action>
        <Action $ghost>
          <span><Icon size={32} box={32}><path d="M1 16L12 27L31 5" stroke="#a9abaa" strokeWidth="2.500" /></Icon></span>
          Complete
        </Action>
      </Actions>
      <Rule $faint $bottom={19} />
      <Heading>Target Point Distance <InfoIcon /></Heading>
      <DistanceRow>
        <RedRange
          aria-label="Target point distance"
          min="0.1"
          max="2.2"
          step="0.01"
          value={distance}
          $fill={((distance - 0.1) / 2.1) * 100}
          onChange={e => setDistance(e.target.value)}
        />
        <NumberField label="Distance value" value={`${distance}mm`} onChange={e => setDistance(parseFloat(e.target.value) || 0.1)} width={109} height={28} gap={1} />
      </DistanceRow>
      <Heading>
        Scan Settings
        <button aria-label="Fold scan settings"><Chevron size={24} width={2.5} /></button>
      </Heading>
      <Card>
        {FIELDS.map(f => (
          <Field key={f.id} $gap={f.gap}>
            <FieldLabel>
              <label htmlFor={f.id}>{f.label}</label>
              {f.info && <InfoIcon />}
            </FieldLabel>
            <SelectBox>
              <select id={f.id}><option>{f.value}</option></select>
              <Triangle w={10} />
            </SelectBox>
          </Field>
        ))}
      </Card>
      <Rule $top={33} $bottom={28} />
      <Heading $gap={6}>Marker Inner Diameter <InfoIcon /></Heading>
      <Diameters>
        {["3mm", "6mm", "10mm"].map(size => (
          <CheckLabel key={size}>
            <input type="checkbox" defaultChecked />
            <Icon size={20} box={20}><path d="M4 10L9 15L16 5" stroke="#fff" strokeWidth="2" /></Icon>
            {size}
          </CheckLabel>
        ))}
      </Diameters>
      <Rule $top={28} $bottom={29} />
      <Heading>
        <span>Scanning Distance<br />(mm)</span>
        <InfoIcon />
      </Heading>
    </Settings>
  )
}

function App() {
  return (
    <Window lang="zh-CN">
      <GlobalStyle />
      <TitleStrip />
      <TopRibbon />
      <Body>
        <Camera />
        <ScanView />
        <ScanSettings />
        <ScrollTrack><div /></ScrollTrack>
        <ToolColumn>
          {SIDE_TOOLS.map((tool, n) => tool ? (
            <button key={tool[0]} aria-label={tool[0]}>
              <Icon size={32} box={32} stroke="currentColor" strokeWidth="1.5" overflow="visible">{tool[1]}</Icon>
            </button>
          ) : (
            <hr key={n} />
          ))}
        </ToolColumn>
      </Body>
      <StatusBar>
        <UsbIcon />
        USB3.0 Connected
        <i />
        GPU Acceleration
        <Spacer />
        Scan Quality:
        <b>[ Good ]</b>
      </StatusBar>
      <CalloutBox $side="left" $inset={-2} $top={15} $width={260} $height={149} />
      <CalloutBox $side="left" $inset={0} $top={224} $width={424} $height={877} />
      <CalloutBox $side="right" $inset={556} $top={327} $width={208} $height={882} />
      <CalloutBox $side="right" $inset={85} $top={278} $width={447} $height={145} />
      <CalloutBox $side="right" $inset={83} $top={446} $width={451} $height={779} />
      <CalloutBadge $side="left" $inset={259} $top={104}>3</CalloutBadge>
      <CalloutBadge $side="left" $inset={433} $top={603}>5</CalloutBadge>
      <CalloutBadge $side="right" $inset={653} $top={623}>6</CalloutBadge>
      <CalloutBadge $side="right" $inset={214} $top={331}>7</CalloutBadge>
      <CalloutBadge $side="right" $inset={247} $top={593}>4</CalloutBadge>
    </Window>
  )
}

export default App;
